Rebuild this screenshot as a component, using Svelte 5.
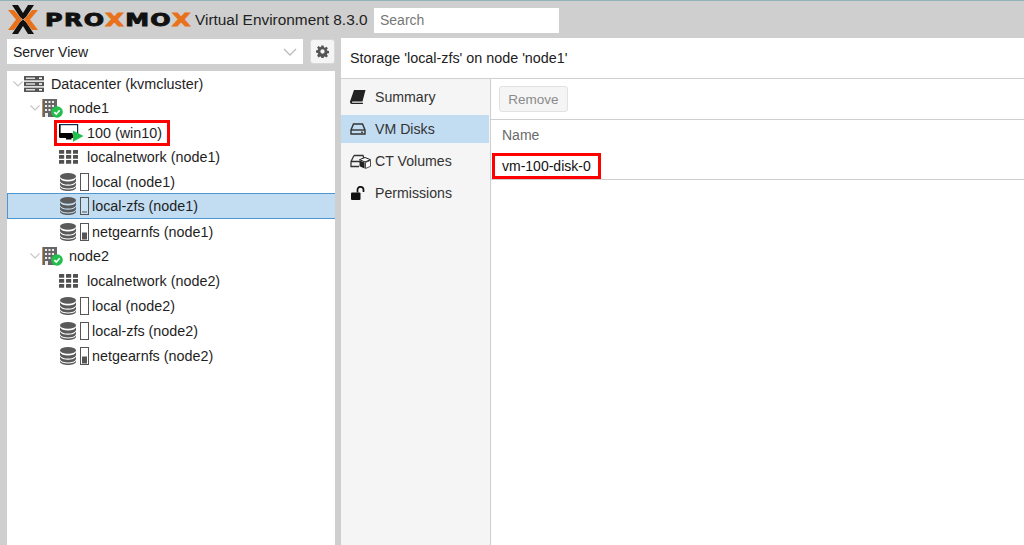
<script>
  const rows = [
    { id: 'dc', label: 'Datacenter (kvmcluster)', depth: 0, icon: 'dc', open: true },
    { id: 'n1', label: 'node1', depth: 1, icon: 'node', open: true },
    { id: 'vm', label: '100 (win10)', depth: 2, icon: 'vm', mark: true },
    { id: 'net1', label: 'localnetwork (node1)', depth: 2, icon: 'net' },
    { id: 's1', label: 'local (node1)', depth: 2, icon: 'store', fill: 0 },
    { id: 's2', label: 'local-zfs (node1)', depth: 2, icon: 'store', fill: 2, selected: true },
    { id: 's3', label: 'netgearnfs (node1)', depth: 2, icon: 'store', fill: 7 },
    { id: 'n2', label: 'node2', depth: 1, icon: 'node', open: true },
    { id: 'net2', label: 'localnetwork (node2)', depth: 2, icon: 'net' },
    { id: 's4', label: 'local (node2)', depth: 2, icon: 'store', fill: 0 },
    { id: 's5', label: 'local-zfs (node2)', depth: 2, icon: 'store', fill: 0 },
    { id: 's6', label: 'netgearnfs (node2)', depth: 2, icon: 'store', fill: 7 }
  ];

  const tabs = [
    { label: 'Summary', icon: 'book' },
    { label: 'VM Disks', icon: 'hdd', active: true },
    { label: 'CT Volumes', icon: 'ct' },
    { label: 'Permissions', icon: 'unlock' }
  ];
</script>

{#snippet treeIcon(row)}
  {#if row.icon === 'dc'}
    <svg class="ic ic-dc" viewBox="0 0 20 16" aria-hidden="true">
      <g fill="#555"><rect y="0" width="20" height="4.4" /><rect y="5.8" width="20" height="4.4" /><rect y="11.6" width="20" height="4.4" /></g>
      <g fill="#fff"><rect x="2" y="1.6" width="9" height="1.2" /><rect x="2" y="7.4" width="9" height="1.2" /><rect x="2" y="13.2" width="9" height="1.2" /><rect x="15" y="1.4" width="3" height="1.6" /><rect x="15" y="7.2" width="3" height="1.6" /><rect x="15" y="13" width="3" height="1.6" /></g>
    </svg>
  {:else if row.icon === 'node'}
    <svg class="ic ic-node" viewBox="0 0 21 19" aria-hidden="true">
      <rect x="0" y="0" width="15" height="18" fill="#666" />
      <rect x="0" y="0" width="1" height="18" fill="#c98d5a" />
      <g fill="#eee">
        <rect x="3" y="2" width="2" height="2" /><rect x="6.500" y="2" width="2" height="2" /><rect x="10" y="2" width="2" height="2" />
        <rect x="3" y="6" width="2" height="2" /><rect x="6.500" y="6" width="2" height="2" /><rect x="10" y="6" width="2" height="2" />
        <rect x="3" y="10" width="2" height="2" /><rect x="6.500" y="10" width="2" height="2" /><rect x="10" y="10" width="2" height="2" />
        <rect x="3" y="14" width="3" height="4" />
      </g>
      <circle cx="15" cy="13" r="5.800" fill="#21bf4b" />
      <path d="M12.300 13.100l2 2 3.400-3.800" fill="none" stroke="#fff" stroke-width="1.700" />
    </svg>
  {:else if row.icon === 'vm'}
    <svg class="ic ic-vm" viewBox="0 0 25 18" aria-hidden="true">
      <rect x="0.600" y="0.600" width="18" height="12" fill="none" stroke="#0d2b4e" stroke-width="1.200" />
      <path d="M0 1h1.500v8h12v1.500h1V14h-2v1.500H7V14H1.500A1.500 1.500 0 0 1 0 12.500z" fill="#000" />
      <path d="M14 6.500L24.500 12 14 17.800z" fill="#21bf4b" />
    </svg>
  {:else if row.icon === 'net'}
    <svg class="ic ic-net" viewBox="0 0 19 14" fill="#505050" aria-hidden="true">
      {#each [0, 5, 10] as y}
        {#each [0, 7, 14] as x}
          <rect {x} {y} width="5.200" height="3.800" rx="0.500" />
        {/each}
      {/each}
    </svg>
  {:else}
    <svg class="ic ic-store" viewBox="0 0 29 18" aria-hidden="true">
      <g fill="#5a5a5a">
        <ellipse cx="8" cy="3.400" rx="8" ry="3.400" />
        <path d="M0 5.200c1 2.200 4 3.200 8 3.200s7-1 8-3.200v3c-1 2.200-4 3.400-8 3.400s-7-1.200-8-3.400z" />
        <path d="M0 9.600c1 2.200 4 3.200 8 3.200s7-1 8-3.200v2.600c-1 2.200-4 3.200-8 3.200s-7-1-8-3.200z" />
        <path d="M0 13.600c1 2.200 4 3 8 3s7-.8 8-3v1.400c-.6 2-4 3-8 3s-7.400-1-8-3z" />
      </g>
      <rect x="20.500" y="0.500" width="8" height="17" fill="#fff" fill-opacity="0.150" stroke="#555" />
      {#if row.fill}
        <rect x="22" y={16.500 - row.fill} width="5" height={row.fill > 2 ? row.fill : 1} fill="#555" />
      {/if}
    </svg>
  {/if}
{/snippet}

{#snippet tabIcon(name)}
  {#if name === 'book'}
    <svg class="tab-ic" viewBox="0 0 16 14" aria-hidden="true">
      <path d="M4 0h11.500l-3 11.500H2.500c-.8 0-.8 1.200 0 1.200h10.600l-.3 1.300H2C.3 14-.3 12.400.2 11z" fill="#222" />
    </svg>
  {:else if name === 'hdd'}
    <svg class="tab-ic" viewBox="0 0 16 14" aria-hidden="true">
      <path d="M3.500 2h9L15 8v4H1V8z" fill="none" stroke="#333" stroke-width="1.400" />
      <path d="M1 8h14" stroke="#333" stroke-width="1.400" />
      <rect x="11" y="9.600" width="2" height="1.200" fill="#333" />
    </svg>
  {:else if name === 'ct'}
    <svg class="tab-ic wide" viewBox="0 0 21 15" aria-hidden="true">
      <path d="M4 1.500h9L14 5M1 7.500 4 1.500M1 7.500V12.500h8M1 7.500h9" fill="none" stroke="#333" stroke-width="1.300" />
      <path d="M15 3.500l5.500 2.200-5.500 2.200-5.500-2.200z" fill="#fff" stroke="#222" stroke-width="1" />
      <path d="M9.500 6.400l5.100 2.100v6l-5.100-2.200z" fill="#222" />
      <path d="M15.500 8.500l5-2.100v5.900l-5 2.200z" fill="#fff" stroke="#222" stroke-width="0.800" />
    </svg>
  {:else}
    <svg class="tab-ic" viewBox="0 0 16 14" aria-hidden="true">
      <rect x="1" y="6.500" width="9.500" height="7.500" rx="1" fill="#111" />
      <path d="M7.500 6.500V3.800a3 3 0 0 1 6 0V6" fill="none" stroke="#111" stroke-width="1.700" />
    </svg>
  {/if}
{/snippet}

<div class="app">
  <header class="top">
    <div class="logo">
      <svg class="logo-x" viewBox="0 0 30 29" aria-hidden="true">
        <path d="M4 0h6l5 8 5-8h6l-8 12-3 2.500-3-2.500zM4 29h6l5-8 5 8h6l-8-12-3-2.500-3 2.500z" fill="#111" />
        <path d="M0 5h6l8 9.500L6 25H0l8-10.500zM30 5h-6l-8 9.500L24 25h6l-8-10.500z" fill="#e8721c" />
      </svg>
      <span class="logo-word">PRO<b>X</b>MO<b>X</b></span>
    </div>
    <span class="version">Virtual Environment 8.3.0</span>
    <input class="search" placeholder="Search" />
  </header>

  <div class="main">
    <aside class="side">
      <div class="view-bar">
        <div class="combo">
          <span>Server View</span>
          <svg class="combo-arrow" viewBox="0 0 14 8" aria-hidden="true"><polyline points="1,1 7,7 13,1" /></svg>
        </div>
        <button class="gear" aria-label="Settings">
          <svg viewBox="0 0 24 24" aria-hidden="true">
            <path fill="#555" fill-rule="evenodd" d="M10 1h4l.6 3.200 1.900.8L19.200 3 22 5.800l-2 2.700.8 1.900 3.200.6v4l-3.200.6-.8 1.900 2 2.700-2.800 2.800-2.700-2-1.900.8-.6 3.200h-4l-.6-3.200-1.900-.8-2.700 2L2 19.200l2-2.700-.8-1.900L0 14v-4l3.200-.6.8-1.900-2-2.700L4.800 2l2.700 2 1.900-.8zM12 8a4 4 0 1 0 0 8 4 4 0 0 0 0-8z" />
          </svg>
        </button>
      </div>

      <div class="tree">
        {#each rows as row (row.id)}
          <div class="row depth-{row.depth}" class:selected={row.selected}>
            <span class="chevron-slot">
              {#if row.open}
                <svg class="chevron" viewBox="0 0 10 6" aria-hidden="true"><polyline points="0.500,0.500 5,5 9.500,0.500" /></svg>
              {/if}
            </span>
            {#if row.mark}
              <span class="mark">{@render treeIcon(row)}<span class="label">{row.label}</span></span>
            {:else}
              {@render treeIcon(row)}<span class="label">{row.label}</span>
            {/if}
          </div>
        {/each}
      </div>
    </aside>

    <section class="panel">
      <div class="panel-title">Storage 'local-zfs' on node 'node1'</div>
      <div class="panel-body">
        <nav class="tabs">
          {#each tabs as tab}
            <div class="tab" class:active={tab.active}>
              <span class="tab-ic-slot">{@render tabIcon(tab.icon)}</span>
              {tab.label}
            </div>
          {/each}
        </nav>
        <div class="content">
          <div class="toolbar"><button class="remove" disabled>Remove</button></div>
          <div class="col-head">Name</div>
          <div class="grid-row"><span class="cell-mark">vm-100-disk-0</span></div>
        </div>
      </div>
    </section>
  </div>
</div>

<style>
  :global(body) {
    margin: 0;
    background: #cfcfcf;
    overflow: hidden;
  }

  .app {
    width: 1024px;
    height: 545px;
    display: flex;
    flex-direction: column;
    background: #cfcfcf;
    font-family: "Liberation Sans", Arial, sans-serif;
    font-size: 14px;
    color: #1a1a1a;
    overflow: hidden;
  }

  .top {
    height: 37px;
    flex: none;
    border-top: 1px solid #8fb5ba;
    display: flex;
    align-items: center;
    padding-left: 8px;
  }

  .logo {
    display: flex;
    align-items: center;
    width: 187px;
    flex: none;
  }

  .logo-x {
    width: 30px;
    height: 29px;
    flex: none;
  }

  .logo-word {
    margin-left: 7px;
    font-family: "DejaVu Sans", sans-serif;
    font-weight: 700;
    font-size: 18px;
    letter-spacing: 1px;
    color: #111;
    -webkit-text-stroke: 0.9px currentColor;
    white-space: nowrap;
    display: inline-block;
    transform: scaleX(1.33);
    transform-origin: left center;
  }

  .logo-word b {
    color: #e8721c;
  }

  .version {
    font-size: 15.400px;
    white-space: nowrap;
    width: 179px;
    flex: none;
    color: #222;
  }

  .search {
    width: 185px;
    height: 25px;
    box-sizing: border-box;
    border: 0;
    padding: 0 6px;
    font: inherit;
    background: #fff;
    outline: none;
    margin-top: 1px;
  }

  .search::placeholder {
    color: #777;
    opacity: 1;
  }

  .main {
    flex: 1;
    display: flex;
    min-height: 0;
  }

  .side {
    width: 328px;
    margin-left: 7px;
    flex: none;
    display: flex;
    flex-direction: column;
  }

  .view-bar {
    display: flex;
    gap: 7px;
    margin-top: 1px;
    height: 25px;
    flex: none;
  }

  .combo {
    width: 296px;
    background: #fff;
    display: flex;
    align-items: center;
    justify-content: space-between;
    padding: 0 6px;
    box-sizing: border-box;
    color: #222;
  }

  .combo-arrow {
    width: 14px;
    height: 8px;
    fill: none;
    stroke: #bbb;
    stroke-width: 1.300;
  }

  .gear {
    width: 25px;
    height: 25px;
    padding: 0;
    border: 1px solid #d8d8d8;
    border-radius: 3px;
    background: #f5f5f5;
    display: flex;
    align-items: center;
    justify-content: center;
  }

  .gear svg {
    width: 13px;
    height: 13px;
  }

  .tree {
    margin-top: 7px;
    flex: 1;
    background: #fff;
  }

  .row {
    height: 25px;
    box-sizing: border-box;
    display: flex;
    align-items: center;
    white-space: nowrap;
    color: #1f1f1f;
    font-size: 14.350px;
  }

  /* the original sits at a fractional zoom, so row heights alternate */
  .row:nth-child(2),
  .row:nth-child(3),
  .row:nth-child(8) {
    height: 24px;
  }

  .row:nth-child(12) {
    height: 26px;
  }

  .row.selected {
    background: #c2ddf2;
    border: 1px solid #4d96d0;
    border-right: 0;
    height: 26px;
    margin-top: -1px;
  }

  .row.selected .chevron-slot {
    margin-left: -1px;
  }

  .depth-0 { padding-left: 5px; }
  .depth-1 { padding-left: 22px; }
  .depth-2 { padding-left: 38px; }

  .chevron-slot {
    width: 12px;
    flex: none;
    display: flex;
    align-items: center;
  }

  .chevron {
    width: 10px;
    height: 6px;
    margin-left: 1px;
    fill: none;
    stroke: #c4c4c4;
    stroke-width: 1.100;
  }

  .ic { flex: none; display: block; }
  .ic-dc { width: 20px; height: 16px; margin-right: 7px; }
  .ic-node { width: 21px; height: 19px; margin-right: 6px; margin-left: 1px; }
  .ic-vm { width: 25px; height: 18px; margin-right: 3px; }
  .ic-net { width: 19px; height: 14px; margin-left: 2px; margin-right: 9px; }
  .ic-store { width: 29px; height: 18px; margin-left: 3px; margin-right: 3px; }

  .mark {
    display: inline-flex;
    align-items: center;
    box-sizing: border-box;
    height: 26px;
    border: 3px solid #f00;
    margin: 2px 0 0 -3px;
    padding: 0 5px 0 2px;
  }

  .panel {
    margin-left: 6px;
    flex: 1;
    min-width: 0;
    background: #fff;
    display: flex;
    flex-direction: column;
  }

  .panel-title {
    height: 41px;
    flex: none;
    box-sizing: border-box;
    display: flex;
    align-items: center;
    padding: 0 9px 1px;
    border-bottom: 1px solid #cfcfcf;
    color: #222;
    background: #fff;
    font-size: 14.350px;
  }

  .panel-body {
    flex: 1;
    display: flex;
    min-height: 0;
  }

  .tabs {
    width: 150px;
    flex: none;
    box-sizing: border-box;
    background: #f5f5f5;
    border-right: 1px solid #cfcfcf;
    padding-top: 2px;
    font-size: 14.150px;
  }

  .tab {
    height: 32px;
    display: flex;
    align-items: center;
    color: #333;
    margin-right: 1px;
  }

  .tab.active {
    background: #c2ddf2;
    height: 28px;
    margin: 2px 1px 2px 0;
  }

  .tab-ic-slot {
    width: 34px;
    flex: none;
    display: flex;
    justify-content: center;
  }

  .tab-ic {
    width: 16px;
    height: 14px;
    margin-left: 0;
  }

  .tab-ic.wide {
    width: 21px;
    height: 15px;
    margin-left: 4px;
  }

  .content {
    flex: 1;
    min-width: 0;
  }

  .toolbar {
    height: 41px;
    box-sizing: border-box;
    border-bottom: 1px solid #cfcfcf;
    padding: 7px 0 0 8px;
  }

  .remove {
    width: 69px;
    height: 26px;
    padding: 0;
    font: inherit;
    font-size: 13.500px;
    color: #8a8a8a;
    background: #f5f5f5;
    border: 1px solid #e2e2e2;
    border-radius: 3px;
  }

  .col-head {
    height: 30px;
    padding: 0 11px;
    display: flex;
    align-items: center;
    color: #6a6a6a;
  }

  .grid-row {
    height: 30px;
    box-sizing: border-box;
    border-bottom: 1px solid #cfcfcf;
    padding: 3px 0 0 1px;
  }

  .cell-mark {
    display: inline-flex;
    align-items: center;
    box-sizing: border-box;
    width: 109px;
    height: 26px;
    border: 3px solid #f00;
    padding-left: 7px;
    color: #111;
    background: #fff;
  }
</style>
